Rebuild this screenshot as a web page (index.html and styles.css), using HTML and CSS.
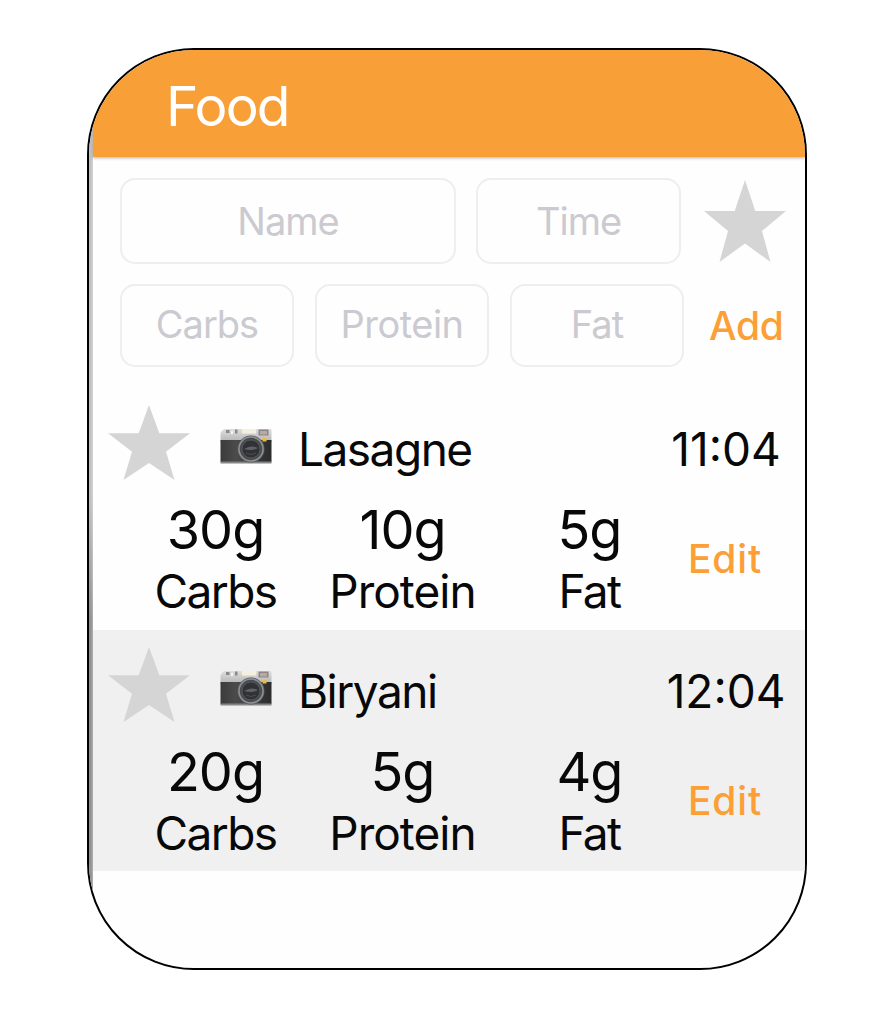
FILE: index.html
```html
<!DOCTYPE html>
<html lang="en">
<head>
<meta charset="utf-8">
<title>Food</title>
<link rel="stylesheet" href="styles.css">
</head>
<body>
<svg class="defs" width="0" height="0">
  <defs>
    <linearGradient id="metal" x1="0" y1="0" x2="0" y2="1"><stop offset="0" stop-color="#dedede"/><stop offset="1" stop-color="#b4b4b6"/></linearGradient>
    <linearGradient id="leather" x1="0" y1="0" x2="1" y2="0"><stop offset="0" stop-color="#3b3b3b"/><stop offset=".3" stop-color="#4b4b4b"/><stop offset="1" stop-color="#2c2c2c"/></linearGradient>
    <symbol id="star" viewBox="0 0 82 82" preserveAspectRatio="none">
      <path d="M41 0 51.300 31 82 31 58 51 66.500 82 41 63.500 15.500 82 24 51 0 31 30.700 31Z" fill="#d5d5d5"/>
    </symbol>
    <symbol id="camera" viewBox="0 0 52 37">
      <path d="M1 4 4 1H50.500Q51.500 1 51.500 3V14H.5V6Z" fill="url(#metal)"/>
      <path d="M6 2h3.500v3H6zM15 1.500h2.500v4H15z" fill="#8a8a8a"/>
      <path d="M11 3h2v3h-2z" fill="#f5f5f5"/>
      <path d="M22 1h14v4.500H22z" fill="#f4f0df"/>
      <path d="M38.500 1.500h10v6h-10z" fill="#8c8582"/>
      <path d="M40 3h7v3.500h-7z" fill="#b7aaa5"/>
      <path d="M.5 12H51.500V34H.5Z" fill="url(#leather)"/>
      <path d="M.5 33.500H51.500V35.500H.5Z" fill="#858585"/>
      <path d="M42.500 10h4v3.500h-4z" fill="#e9bd3b"/>
      <circle cx="31" cy="21" r="13.500" fill="#5b5d60"/>
      <circle cx="31" cy="21" r="12" fill="#4a4d50" stroke="#8f9295" stroke-width="1.500"/>
      <circle cx="31" cy="21" r="9" fill="#303235" stroke="#54575a"/>
      <path d="M24 21q7-4.500 14-1-6 3.500-14 1" fill="#606366"/>
      <path d="M26 25q5 3 10 0" stroke="#4c4f52" fill="none"/>
    </symbol>
  </defs>
</svg>
<main class="frame">
  <div class="edge"></div>
  <div class="screen">
    <header class="header"><h1 class="title">Food</h1></header>
    <section class="form">
      <div class="form-row form-row-main">
        <div class="field name-field"><span class="hint">Name</span></div>
        <div class="field time-field"><span class="hint">Time</span></div>
        <svg class="form-star"><use href="#star"/></svg>
      </div>
      <div class="form-row form-row-macros">
        <div class="field"><span class="hint">Carbs</span></div>
        <div class="field"><span class="hint wide">Protein</span></div>
        <div class="field"><span class="hint">Fat</span></div>
        <span class="action add">Add</span>
      </div>
    </section>
    <section class="item">
      <div class="item-top">
        <svg class="item-star"><use href="#star"/></svg>
        <svg class="camera"><use href="#camera"/></svg>
        <span class="food-name">Lasagne</span>
        <span class="time">11:04</span>
      </div>
      <div class="macros">
        <div class="macro"><span class="value">30g</span><span class="label">Carbs</span></div>
        <div class="macro"><span class="value">10g</span><span class="label wide">Protein</span></div>
        <div class="macro"><span class="value">5g</span><span class="label">Fat</span></div>
        <span class="action edit">Edit</span>
      </div>
    </section>
    <section class="item item-alt">
      <div class="item-top">
        <svg class="item-star"><use href="#star"/></svg>
        <svg class="camera"><use href="#camera"/></svg>
        <span class="food-name">Biryani</span>
        <span class="time">12:04</span>
      </div>
      <div class="macros">
        <div class="macro"><span class="value">20g</span><span class="label">Carbs</span></div>
        <div class="macro"><span class="value">5g</span><span class="label wide">Protein</span></div>
        <div class="macro"><span class="value">4g</span><span class="label">Fat</span></div>
        <span class="action edit">Edit</span>
      </div>
    </section>
  </div>
</main>
</body>
</html>
```
FILE: styles.css
```css
* { box-sizing: border-box; }
body { margin: 0; padding: 48px 87px 47px; background: #fff; font-family: Inter, "Liberation Sans", sans-serif; color: #080808; }
.defs { display: block; }
svg { display: block; flex: none; }
.frame { width: 720px; height: 922px; border: 2px solid #000; border-radius: 107px; overflow: hidden; display: flex; background: #fefefe; }
.edge { width: 4px; flex: none; background: linear-gradient(90deg, transparent 50%, rgba(255,255,255,.3)), linear-gradient(#c2c2c2 0 49%, #929292 62%); }
.screen { width: 712px; flex: none; }
.header { height: 107px; padding: 5px 0 0 73px; background: #f99f38; box-shadow: 0 1px 3px rgba(0,0,0,.3); }
.title { margin: 0; font-size: 55px; line-height: 102px; font-weight: 400; color: #fff; letter-spacing: -1.8px; }
.form { height: 231px; padding: 21px 19px 0 27px; }
.form-row { display: flex; align-items: center; }
.form-row-main { height: 86px; }
.form-row-macros { height: 83px; margin-top: 20px; gap: 21px; }
.field { width: 174px; height: 100%; border: 2px solid #eee; border-radius: 15px; display: flex; justify-content: center; align-items: center; flex: none; }
.name-field { width: 336px; }
.time-field { width: 205px; margin-left: 20px; }
.hint { font-size: 38px; line-height: 44px; color: #cbcad0; letter-spacing: -1px; }
.hint.wide { letter-spacing: -.5px; }
.form-row-macros .hint { padding-bottom: 3px; }
.form-star { width: 82px; height: 82px; margin-left: 23px; }
.action { color: #fc9f36; font-size: 39px; line-height: 44px; font-weight: 500; }
.add { margin-left: 4px; letter-spacing: -.3px; }
.item { height: 242px; }
.item-alt { background: #f0f0f0; height: 241px; }
.item-top { height: 118px; display: flex; align-items: flex-start; padding: 17px 21px 0 15px; }
.item-star { width: 82px; height: 75px; }
.camera { width: 52px; height: 37px; margin: 23px 0 0 30px; }
.food-name { font-size: 46px; line-height: 50px; margin: 19px 0 0 26px; flex: 1; letter-spacing: -1.5px; }
.time { font-size: 46px; line-height: 50px; width: 116px; margin-top: 19px; display: flex; justify-content: center; }
.macros { display: flex; padding-left: 29px; }
.macro { width: 187px; display: flex; flex-direction: column; align-items: center; }
.value { font-size: 54px; line-height: 48px; letter-spacing: -1px; }
.label { font-size: 46px; line-height: 62px; margin-top: 6px; letter-spacing: -1.6px; }
.label.wide { letter-spacing: -1px; }
.edit { width: 84px; text-align: center; margin-top: 31px; letter-spacing: .8px; }
```
